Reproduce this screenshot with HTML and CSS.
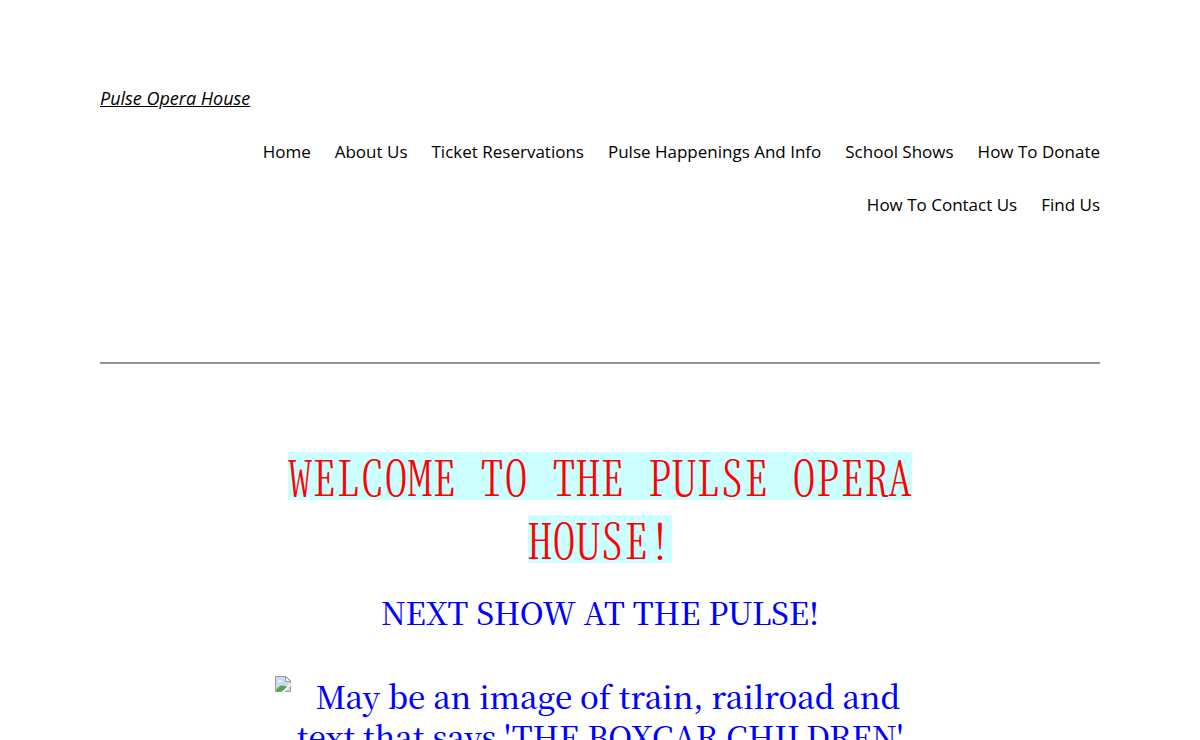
FILE: index.html
```html
<!DOCTYPE html>
<html lang="en">
<head>
    <meta charset="UTF-8">
    <meta name="viewport" content="width=device-width, initial-scale=1.0">
    <title>Pulse Opera House</title>
    <link rel="stylesheet" href="styles.css">
</head>
<body>
    <header class="site-header">
        <p class="site-title"><a href="#">Pulse Opera House</a></p>
        <nav class="site-nav">
            <ul>
                <li><a href="#">Home</a></li>
                <li><a href="#">About Us</a></li>
                <li><a href="#">Ticket Reservations</a></li>
                <li><a href="#">Pulse Happenings And Info</a></li>
                <li><a href="#">School Shows</a></li>
                <li><a href="#">How To Donate</a></li>
                <li><a href="#">How To Contact Us</a></li>
                <li><a href="#">Find Us</a></li>
            </ul>
        </nav>
    </header>

    <hr class="separator">

    <main class="content">
        <h1 class="welcome"><mark>WELCOME TO THE PULSE OPERA HOUSE!</mark></h1>
        <h2 class="next-show">NEXT SHOW AT THE PULSE!</h2>

        <!-- Poster of the next show -->
        <div class="poster">
            <svg class="poster-icon" width="16" height="16" viewBox="0 0 16 16" aria-hidden="true">
                <path d="M0.5 0.5H11L15.5 5V15.5H0.5Z" fill="#c9dafa"/>
                <path d="M3 6a2 2 0 0 1 4 0z" fill="#fff"/>
                <path d="M1 15V14Q4 9 8 9.5Q11 9.5 12 11L8 15Z" fill="#55a845"/>
                <path d="M16 7V9L9 16H7Z" fill="#fff"/>
                <path d="M7 15.5H0.5V0.5H11L15.5 5V7M15.5 10V15.5H10" fill="none" stroke="#999"/>
                <path d="M10.5 0.5V5.5H15.5Z" fill="#fff" stroke="#999"/>
            </svg>
            <p>May be an image of train, railroad and text that says 'THE BOXCAR CHILDREN'</p>
        </div>
    </main>
</body>
</html>
```
FILE: styles.css
```css
* {
    box-sizing: border-box;
}

body {
    margin: 0;
    background-color: #fff;
    color: #000;
    font-family: "Open Sans", sans-serif;
    font-size: 17px;
    line-height: 29px;
}

a {
    color: inherit;
}

.site-header {
    max-width: 1000px;
    margin: 0 auto;
    padding: 84px 0 143px;
}

.site-title {
    margin: 0 0 24px;
    font-size: 18px;
    font-style: italic;
}

.site-nav ul {
    display: flex;
    flex-wrap: wrap;
    justify-content: flex-end;
    gap: 24px;
    margin: 0;
    padding: 0 0 0 147px;
    list-style: none;
}

.site-nav a {
    text-decoration: none;
}

.separator {
    max-width: 1000px;
    margin: 0 auto;
    border: none;
    border-top: 2px solid #949494;
}

.content {
    max-width: 650px;
    margin: 0 auto;
    padding: 80px 0;
    text-align: center;
}

.welcome {
    margin: 0;
    color: #f00;
    font-family: "Noto Serif CJK SC", "Liberation Mono", monospace;
    font-size: 48px;
    font-weight: 200;
    /* half-width letters, like a typewriter */
    font-feature-settings: "hwid";
    line-height: 63px;
}

.welcome mark {
    background: linear-gradient(#cff, #cff) center / 100% 48px no-repeat;
    color: inherit;
    -webkit-box-decoration-break: clone;
    box-decoration-break: clone;
}

.next-show,
.poster {
    color: #00f;
    font-family: "Noto Serif CJK SC", "Liberation Serif", serif;
    font-size: 31px;
    font-weight: 500;
}

.next-show {
    margin: 18px 0 40px;
    line-height: 48px;
}

.poster {
    line-height: 40px;
}

.poster p {
    margin: 0;
}

.poster-icon {
    float: left;
}
```
